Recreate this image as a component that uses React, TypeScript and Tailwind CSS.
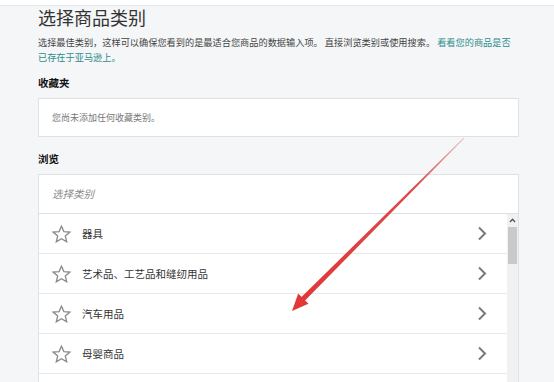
import React from 'react';

const categories = ['器具', '艺术品、工艺品和缝纫用品', '汽车用品', '母婴商品', ''];

const StarIcon = () => (
  <svg width="19" height="18" viewBox="0 0 19 18" className="shrink-0">
    <polygon
      points="9.5,1.2 11.9,6.6 17.8,7.1 13.3,11 14.7,16.8 9.5,13.7 4.3,16.8 5.7,11 1.2,7.1 7.1,6.6"
      fill="none"
      stroke="#8a8a8a"
      strokeWidth="1.3"
    />
  </svg>
);

const Chevron = () => (
  <svg width="10" height="15" viewBox="0 0 10 15" className="shrink-0">
    <polyline points="2,1.5 8,7.5 2,13.5" fill="none" stroke="#7a7a7a" strokeWidth="2" />
  </svg>
);

const Arrow = () => (
  <svg className="absolute left-0 top-0 pointer-events-none" width="554" height="382">
    <defs>
      <linearGradient id="shaft" x1="464" y1="138" x2="303" y2="299" gradientUnits="userSpaceOnUse">
        <stop offset="0" stopColor="#eab0b0" />
        <stop offset="0.3" stopColor="#dc4a4a" />
        <stop offset="1" stopColor="#e03838" />
      </linearGradient>
    </defs>
    <polygon points="463.7,137.7 464.3,138.3 304.8,300.8 301.2,297.2" fill="url(#shaft)" />
    <polygon points="292,311 298.2,293.5 308.5,303.8" fill="#e03838" />
  </svg>
);

export default function App() {
  return (
    <div className="relative w-[554px] h-[382px] overflow-hidden bg-[#f4f6f7] font-['Noto_Sans_CJK_SC',sans-serif]">
      <div className="h-[6px] bg-white border-b border-[#e4e7e9]" />
      <div className="pl-[38px] pr-[35px]">
        <h1 className="text-[18px] leading-[22px] text-[#333] font-normal">选择商品类别</h1>
        <p className="mt-[7px] text-[9.2px] leading-[15px] text-[#444]">
          选择最佳类别，这样可以确保您看到的是最适合您商品的数据输入项。 直接浏览类别或使用搜索。{' '}
          <span className="text-[#2f8c8c]">
            看看您的商品是否
            <br />
            已存在于亚马逊上。
          </span>
        </p>
        <h2 className="mt-[10px] text-[10.5px] leading-[16px] font-bold text-[#111]">收藏夹</h2>
        <div className="mt-[7px] h-[39px] bg-white border border-[#dfe2e4] flex items-center pl-[13px] text-[9px] text-[#777]">
          您尚未添加任何收藏类别。
        </div>
        <h2 className="mt-[14px] text-[10.5px] leading-[16px] font-bold text-[#111]">浏览</h2>
        <div className="mt-[7px] h-[40px] bg-white border border-[#dfe2e4] flex items-center pl-[13px] text-[10.5px] italic text-[#888]">
          选择类别
        </div>
        <div className="flex bg-white border-x border-[#dfe2e4]">
          <div className="flex-1">
            {categories.map((c, i) => (
              <div key={i} className="h-[40px] flex items-center border-b border-[#e8e9ea] pl-[13px] pr-[20px]">
                {c && (
                  <>
                    <StarIcon />
                    <span className="ml-[11px] flex-1 text-[10.5px] text-[#333]">{c}</span>
                    <Chevron />
                  </>
                )}
              </div>
            ))}
          </div>
          <div className="w-[11px] bg-[#f1f1f1] flex flex-col items-center">
            <div className="h-[13px] flex items-center justify-center">
              <svg width="7" height="5" viewBox="0 0 7 5">
                <polyline points="1,4 3.5,1.2 6,4" fill="none" stroke="#555" strokeWidth="1.3" />
              </svg>
            </div>
            <div className="w-[9px] h-[37px] bg-[#c9c9c9]" />
          </div>
        </div>
      </div>
      <Arrow />
    </div>
  );
}
